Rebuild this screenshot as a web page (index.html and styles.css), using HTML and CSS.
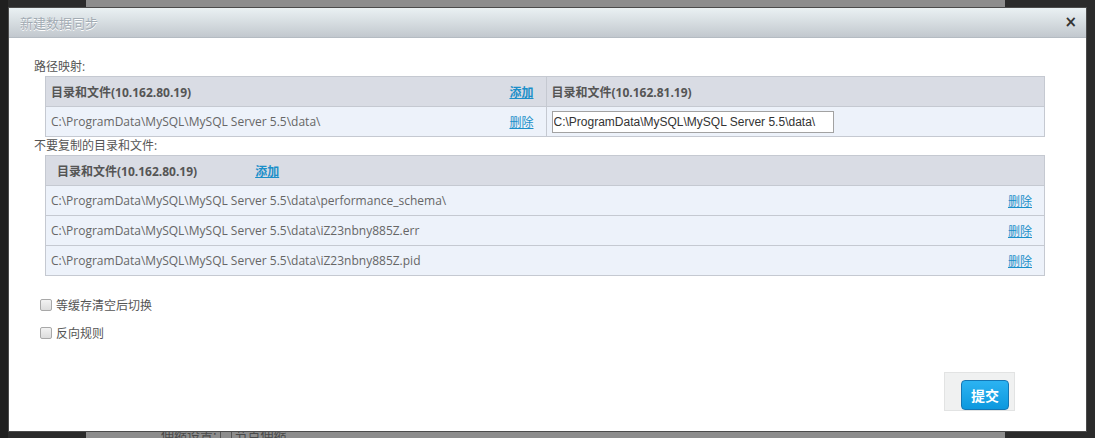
FILE: index.html
```html
<!DOCTYPE html>
<html lang="zh-CN">
<head>
<meta charset="utf-8">
<title>新建数据同步</title>
<link rel="stylesheet" href="styles.css">
</head>
<body>
<div class="backdrop">
  <div class="bg-side"></div>
  <div class="bg-main">
    <div class="bg-text">伸缩设置: <span class="bg-box"></span> 节点伸缩</div>
  </div>
  <div class="bg-right"></div>
</div>

<div class="dialog">
  <div class="dialog-head">
    <span class="dialog-title">新建数据同步</span>
    <span class="dialog-close">×</span>
  </div>
  <div class="dialog-body">
    <div class="section-label">路径映射:</div>
    <div class="grid map-grid">
      <div class="row head">
        <div class="cell half"><b>目录和文件(10.162.80.19)</b><a class="link" href="#">添加</a></div>
        <div class="cell half right-col"><b>目录和文件(10.162.81.19)</b></div>
      </div>
      <div class="row data">
        <div class="cell half"><span>C:\ProgramData\MySQL\MySQL Server 5.5\data\</span><a class="link" href="#">删除</a></div>
        <div class="cell half right-col"><input class="path-input" type="text" value="C:\ProgramData\MySQL\MySQL Server 5.5\data\"></div>
      </div>
    </div>

    <div class="section-label">不要复制的目录和文件:</div>
    <div class="grid exclude-grid">
      <div class="row head">
        <div class="cell full head-pad"><b>目录和文件(10.162.80.19)</b><a class="link add-inline" href="#">添加</a></div>
      </div>
      <div class="row data">
        <div class="cell full"><span>C:\ProgramData\MySQL\MySQL Server 5.5\data\performance_schema\</span><a class="link" href="#">删除</a></div>
      </div>
      <div class="row data">
        <div class="cell full"><span>C:\ProgramData\MySQL\MySQL Server 5.5\data\iZ23nbny885Z.err</span><a class="link" href="#">删除</a></div>
      </div>
      <div class="row data">
        <div class="cell full"><span>C:\ProgramData\MySQL\MySQL Server 5.5\data\iZ23nbny885Z.pid</span><a class="link" href="#">删除</a></div>
      </div>
    </div>

    <div class="options">
      <label class="opt"><input type="checkbox" class="chk"><span>等缓存清空后切换</span></label>
      <label class="opt"><input type="checkbox" class="chk"><span>反向规则</span></label>
    </div>

    <div class="footer">
      <div class="btn-box"><button class="btn-submit" type="button">提交</button></div>
    </div>
  </div>
</div>
</body>
</html>
```

FILE: styles.css
```css
* { box-sizing: border-box; }
html, body { margin: 0; padding: 0; }
body {
  width: 1095px;
  height: 438px;
  overflow: hidden;
  position: relative;
  font-family: "Open Sans", "Noto Sans CJK SC", sans-serif;
  font-size: 12px;
  color: #555;
}

.backdrop {
  display: flex;
  height: 438px;
}
.bg-side {
  width: 86px;
  background: #2b2b2b;
  border-left: 8px solid #1f1f1f;
}
.bg-main {
  flex: 1;
  background: #8d8d8d;
  position: relative;
}
.bg-right {
  width: 90px;
  background: #2b2b2b;
}
.bg-text {
  position: absolute;
  left: 75px;
  top: 425px;
  color: #4a4a4a;
  font-size: 13px;
  font-family: "Noto Sans CJK SC", sans-serif;
}
.bg-box {
  display: inline-block;
  width: 12px;
  height: 12px;
  border: 1px solid #555;
  border-radius: 2px;
  vertical-align: middle;
}

.dialog {
  position: absolute;
  left: 8px;
  top: 7px;
  width: 1079px;
  height: 425px;
  background: #fff;
  border: 1px solid #4b4b4b;
  display: flex;
  flex-direction: column;
}
.dialog-head {
  height: 30px;
  flex: none;
  background: linear-gradient(#eaf1f3, #c2c8ce);
  border-bottom: 1px solid #b4bbc2;
  display: flex;
  align-items: center;
  justify-content: space-between;
  padding: 0 9px 0 11px;
}
.dialog-title {
  font-family: "Noto Sans CJK SC", sans-serif;
  font-size: 13px;
  color: #a2abb3;
  text-shadow: 0 1px 0 #fff;
}
.dialog-close {
  font-family: "DejaVu Sans", sans-serif;
  font-size: 15px;
  font-weight: bold;
  color: #333;
  line-height: 1;
}

.dialog-body {
  padding: 20px 0 0 25px;
  display: flex;
  flex-direction: column;
}
.section-label {
  height: 18px;
  line-height: 18px;
  color: #555;
}

.grid {
  margin-left: 11px;
  width: 1000px;
  border: 1px solid #c5c9d1;
  border-bottom: none;
}
.row {
  display: flex;
  height: 30px;
  border-bottom: 1px solid #c5c9d1;
}
.row.head { background: #d9dce4; }
.row.data { background: #edf2fa; }
.cell {
  display: flex;
  align-items: center;
  justify-content: space-between;
  padding: 0 12px 0 5px;
}
.cell.half { width: 500px; }
.cell.half.right-col {
  width: 499px;
  border-left: 1px solid #c5c9d1;
  justify-content: flex-start;
  padding-left: 5px;
}
.cell.full { width: 998px; }
.cell.head-pad {
  padding-left: 11px;
  justify-content: flex-start;
}
.cell b { font-weight: bold; color: #555; }
.cell span { color: #666; }
.link {
  color: #1b8fc9;
  text-decoration: underline;
}
.row.head .link { font-weight: bold; }
.add-inline { margin-left: 58px; }

.path-input {
  width: 282px;
  height: 22px;
  border: 1px solid #a2a2a2;
  padding: 0 1px;
  font-family: "Liberation Sans", "Noto Sans CJK SC", sans-serif;
  font-size: 12px;
  color: #333;
  background: #fff;
}

.options {
  margin-top: 19px;
  padding-left: 6px;
  display: flex;
  flex-direction: column;
  gap: 8px;
}
.opt {
  display: flex;
  align-items: center;
  height: 20px;
  color: #555;
}
.chk {
  appearance: none;
  -webkit-appearance: none;
  margin: 0 4px 0 0;
  width: 12px;
  height: 12px;
  border: 1px solid #a8a8a8;
  border-radius: 2px;
  background: linear-gradient(#f2f2f2, #dcdcdc);
}

.footer {
  margin-top: 29px;
  display: flex;
  justify-content: flex-end;
  padding-right: 71px;
}
.btn-box {
  width: 71px;
  height: 39px;
  background: #f0f1f1;
  border: 1px solid #e2e3e3;
  padding: 7px 0 0 16px;
}
.btn-submit {
  width: 48px;
  height: 30px;
  border: 1px solid #1476b4;
  border-radius: 4px;
  background: linear-gradient(#2cb3f2, #0c98de);
  color: #fff;
  font-family: "Noto Sans CJK SC", sans-serif;
  font-size: 14px;
  font-weight: bold;
  padding: 0;
}
```
